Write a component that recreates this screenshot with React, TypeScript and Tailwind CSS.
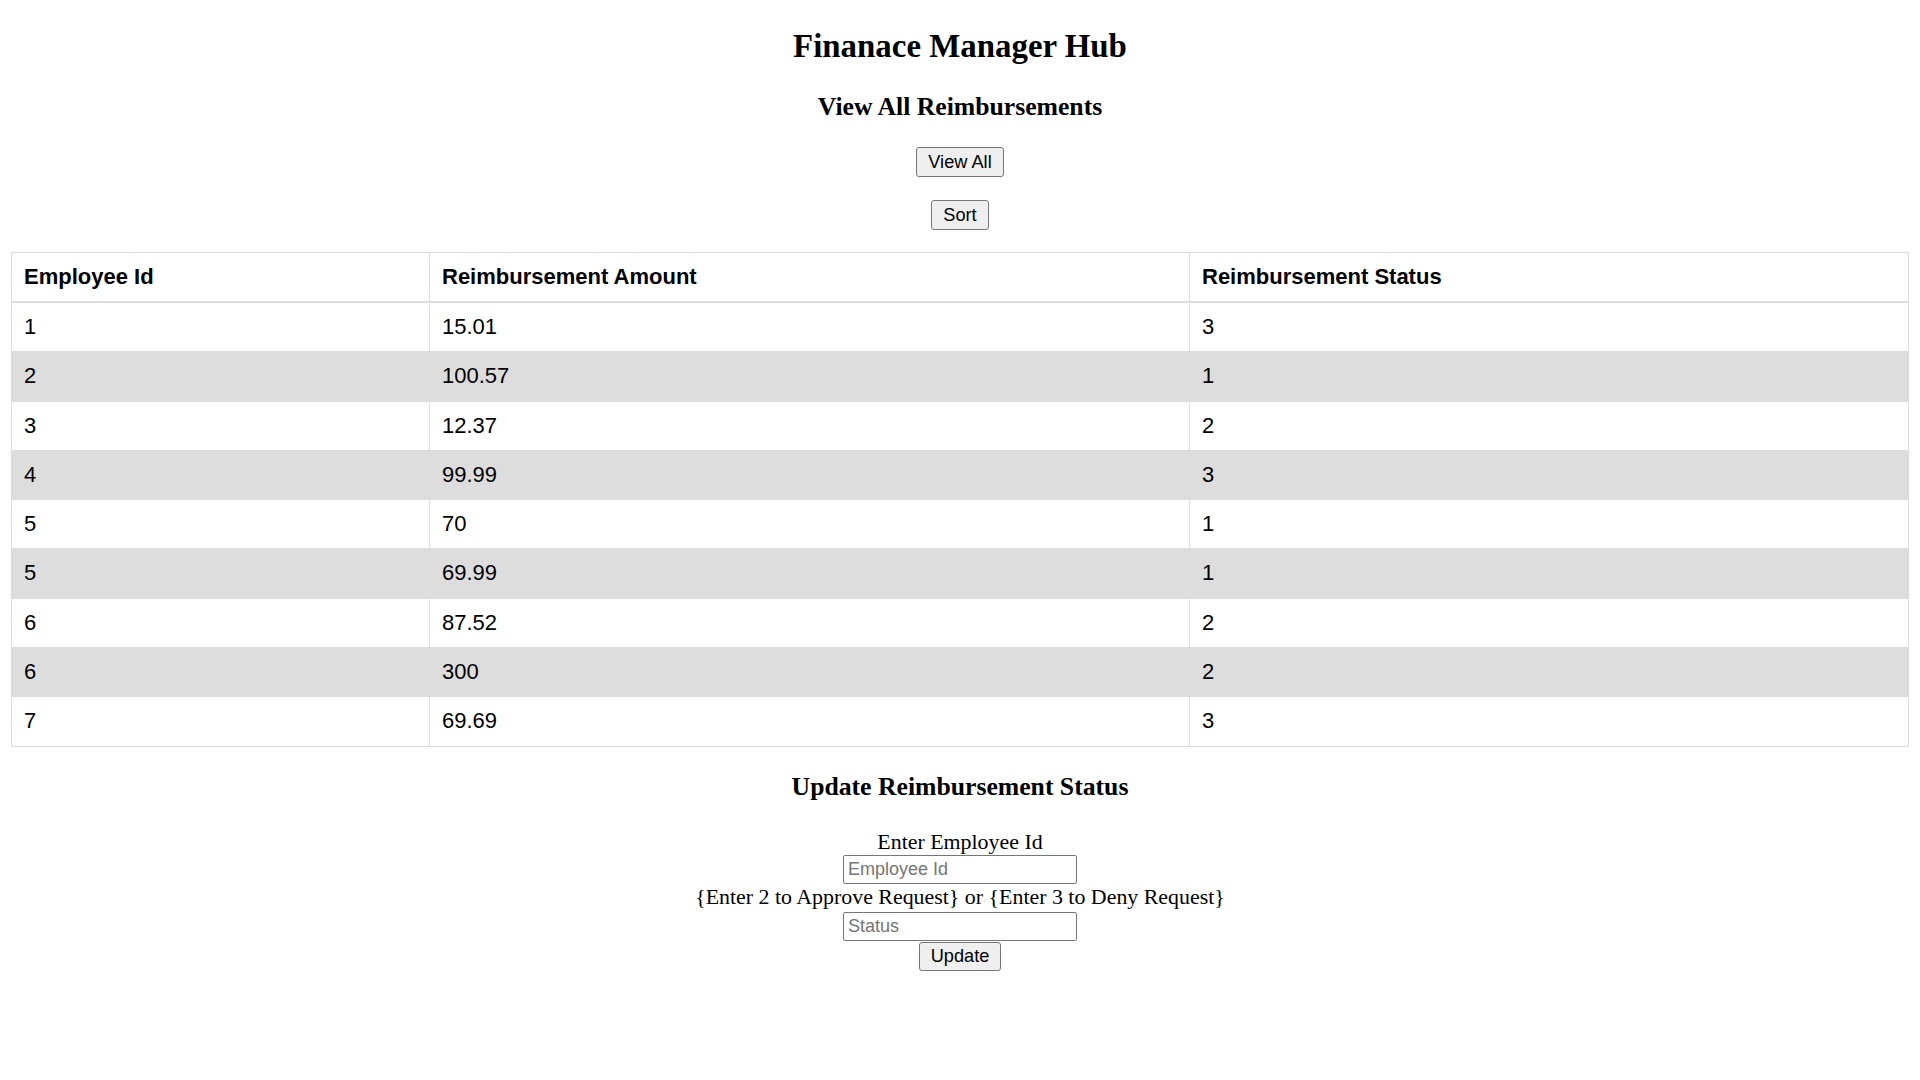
import { useState } from "react";

type Reimbursement = {
  employeeId: number;
  amount: string;
  status: number;
};

const reimbursements: Reimbursement[] = [
  { employeeId: 1, amount: "15.01", status: 3 },
  { employeeId: 2, amount: "100.57", status: 1 },
  { employeeId: 3, amount: "12.37", status: 2 },
  { employeeId: 4, amount: "99.99", status: 3 },
  { employeeId: 5, amount: "70", status: 1 },
  { employeeId: 5, amount: "69.99", status: 1 },
  { employeeId: 6, amount: "87.52", status: 2 },
  { employeeId: 6, amount: "300", status: 2 },
  { employeeId: 7, amount: "69.69", status: 3 },
];

const serif = "font-['Liberation_Serif','Times_New_Roman',serif]";
const sans = "font-['Liberation_Sans',Arial,sans-serif]";

function PlainButton({ label, className = "" }: { label: string; className?: string }) {
  return (
    <button
      className={`${sans} h-[30px] px-[11px] text-[18.2px] leading-none text-black bg-[#efefef] border border-[#767676] rounded-[3px] ${className}`}
    >
      {label}
    </button>
  );
}

export default function App() {
  const [employeeId, setEmployeeId] = useState("");
  const [status, setStatus] = useState("");

  return (
    <div className={`${serif} min-h-screen w-full bg-white text-black flex flex-col items-center pt-[28px]`}>
      {/* Header */}
      <h1 className="text-[32.9px] leading-[36px] font-bold">Finanace Manager Hub</h1>
      <h2 className="mt-[28.5px] text-[25.7px] leading-[28px] font-bold">View All Reimbursements</h2>

      <PlainButton label="View All" className="mt-[26.5px]" />
      <PlainButton label="Sort" className="mt-[23px]" />

      {/* Reimbursement table */}
      <div className="mt-[22px] w-full px-[11px]">
        <table className={`${sans} w-full table-fixed border-separate border-spacing-0 text-[22px] text-left text-black`}>
          <colgroup>
            <col className="w-[418px]" />
            <col className="w-[760px]" />
            <col />
          </colgroup>
          <thead>
            <tr>
              <th className="border-t border-l border-b-2 border-[#dddddd] px-3 py-3 leading-[24px] font-bold">
                Employee Id
              </th>
              <th className="border-t border-l border-b-2 border-[#dddddd] px-3 py-3 leading-[24px] font-bold">
                Reimbursement Amount
              </th>
              <th className="border-t border-l border-r border-b-2 border-[#dddddd] px-3 py-3 leading-[24px] font-bold">
                Reimbursement Status
              </th>
            </tr>
          </thead>
          <tbody>
            {reimbursements.map((r, i) => (
              <tr key={i} className={i % 2 === 1 ? "bg-[#dddddd]" : "bg-white"}>
                <td className="border-l border-b border-[#dddddd] px-3 py-3 leading-[24.3px]">{r.employeeId}</td>
                <td className="border-l border-b border-[#dddddd] px-3 py-3 leading-[24.3px]">{r.amount}</td>
                <td className="border-l border-r border-b border-[#dddddd] px-3 py-3 leading-[24.3px]">{r.status}</td>
              </tr>
            ))}
          </tbody>
        </table>
      </div>

      {/* Update form */}
      <h2 className="mt-[26.6px] text-[25.7px] leading-[28px] font-bold">Update Reimbursement Status</h2>

      <div className="mt-[28px] flex flex-col items-center text-[21.9px]">
        <span className="leading-[25px]">Enter Employee Id</span>
        <input
          value={employeeId}
          onChange={(e) => setEmployeeId(e.target.value)}
          placeholder="Employee Id"
          className={`${sans} mt-[1px] h-[29px] w-[234px] px-[4px] text-[18px] text-black border border-[#767676] rounded-[2px] placeholder:text-[#757575] outline-none`}
        />
        <span className="leading-[25px]">{"{Enter 2 to Approve Request} or {Enter 3 to Deny Request}"}</span>
        <input
          value={status}
          onChange={(e) => setStatus(e.target.value)}
          placeholder="Status"
          className={`${sans} mt-[2.5px] h-[29px] w-[234px] px-[4px] text-[18px] text-black border border-[#767676] rounded-[2px] placeholder:text-[#757575] outline-none`}
        />
        <PlainButton label="Update" className="mt-[1px] !h-[29px]" />
      </div>
    </div>
  );
}
